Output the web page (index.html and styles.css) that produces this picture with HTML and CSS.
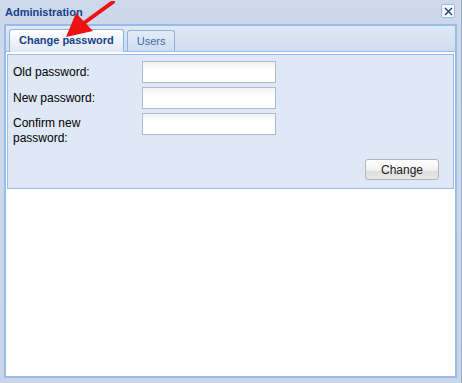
FILE: index.html
```html
<!DOCTYPE html>
<html lang="en">
<head>
    <meta charset="UTF-8">
    <title>Administration</title>
    <link rel="stylesheet" href="styles.css">
</head>
<body>

<div class="window">
    <div class="window-header">
        <span class="window-title">Administration</span>
        <span class="close-btn">
            <svg width="9" height="9" viewBox="0 0 9 9"><path d="M1 1 L8 8 M8 1 L1 8" stroke="#15428b" stroke-width="1.4" fill="none"/></svg>
        </span>
    </div>

    <div class="window-body">
        <div class="tab-bar">
            <div class="tab active">Change password</div>
            <div class="tab">Users</div>
        </div>

        <form class="tab-panel">
            <div class="row">
                <label>Old password:</label>
                <input type="password">
            </div>
            <div class="row">
                <label>New password:</label>
                <input type="password">
            </div>
            <div class="row row-tall">
                <label>Confirm new password:</label>
                <input type="password">
            </div>
            <div class="actions">
                <button type="button">Change</button>
            </div>
        </form>
    </div>

    <!-- flecha roja que marca la pestaña -->
    <svg class="arrow" width="60" height="45" viewBox="0 0 60 45">
        <path d="M47 1 L18 22" stroke="#ee1111" stroke-width="4" stroke-linecap="round" fill="none"/>
        <polygon points="0,36 10,12 27,30" fill="#ee1111"/>
    </svg>
</div>

</body>
</html>
```

FILE: styles.css
```css
* {
    box-sizing: border-box;
    margin: 0;
    padding: 0;
}

body {
    font-family: 'Liberation Sans', Arial, sans-serif;
    font-size: 12px;
    color: #000;
    background-color: #ccd9ea;
}

/* Ventana */
.window {
    position: relative;
    height: 383px;
    width: 462px;
    padding: 0 4px 5px 4px;
    display: flex;
    flex-direction: column;
    background: linear-gradient(#cdd9ea, #c9d6e8);
    border-right: 1px solid #9eaec4;
}

.window-header {
    height: 24px;
    display: flex;
    align-items: center;
    justify-content: space-between;
    padding: 0 2px 0 1px;
}

.window-title {
    font-size: 11px;
    font-weight: bold;
    color: #15428b;
    margin-top: -1px;
}

.close-btn {
    width: 14px;
    height: 14px;
    margin-top: -2px;
    border: 1px solid #99bbe8;
    border-radius: 2px;
    background: #f6f9fd;
    display: flex;
    align-items: center;
    justify-content: center;
}

.window-body {
    flex: 1;
    display: flex;
    flex-direction: column;
    background: #fff;
    border: 2px solid #99bbe8;
    padding: 0 1px;
}

/* Pestañas */
.tab-bar {
    height: 26px;
    display: flex;
    align-items: flex-end;
    gap: 3px;
    background: linear-gradient(#e0e9f6, #cedcef);
    border-bottom: 1px solid #99bbe8;
    margin: 0 -1px;
    padding-left: 3px;
}

.tab {
    height: 21px;
    padding: 0 9px;
    font-size: 11px;
    line-height: 20px;
    color: #416aa3;
    border: 1px solid #8db2e3;
    border-bottom: none;
    border-radius: 3px 3px 0 0;
    background: linear-gradient(#e3ebf7, #cfdcef);
}

.tab.active {
    height: 23px;
    padding: 0 9px;
    font-weight: bold;
    color: #15428b;
    background: linear-gradient(#ffffff, #dfe8f6);
    margin-bottom: -1px;
    line-height: 21px;
}

.tab-panel {
    margin-top: 2px;
    padding: 6px 14px 8px 5px;
    background-color: #dfe8f6;
    border: 1px solid #99bbe8;
}

.row {
    display: flex;
    align-items: center;
    margin-bottom: 4px;
}

.row label {
    width: 129px;
    padding-right: 29px;
    line-height: 15px;
    color: #000;
}

.row-tall {
    align-items: flex-start;
}

.row-tall label {
    padding-top: 3px;
}

.row input {
    width: 134px;
    height: 22px;
    border: 1px solid #b5b8c8;
    background: linear-gradient(#f0f1f2, #ffffff 40%);
}

.actions {
    display: flex;
    justify-content: flex-end;
    margin-top: 13px;
}

.actions button {
    width: 74px;
    height: 21px;
    font-family: 'Liberation Sans', Arial, sans-serif;
    font-size: 12px;
    color: #222;
    border: 1px solid #b4b4b4;
    border-radius: 3px;
    background: linear-gradient(#ffffff, #f2f2f2 55%, #dedede 56%, #e6e6e6);
}

.arrow {
    position: absolute;
    left: 66px;
    top: 1px;
}
```
